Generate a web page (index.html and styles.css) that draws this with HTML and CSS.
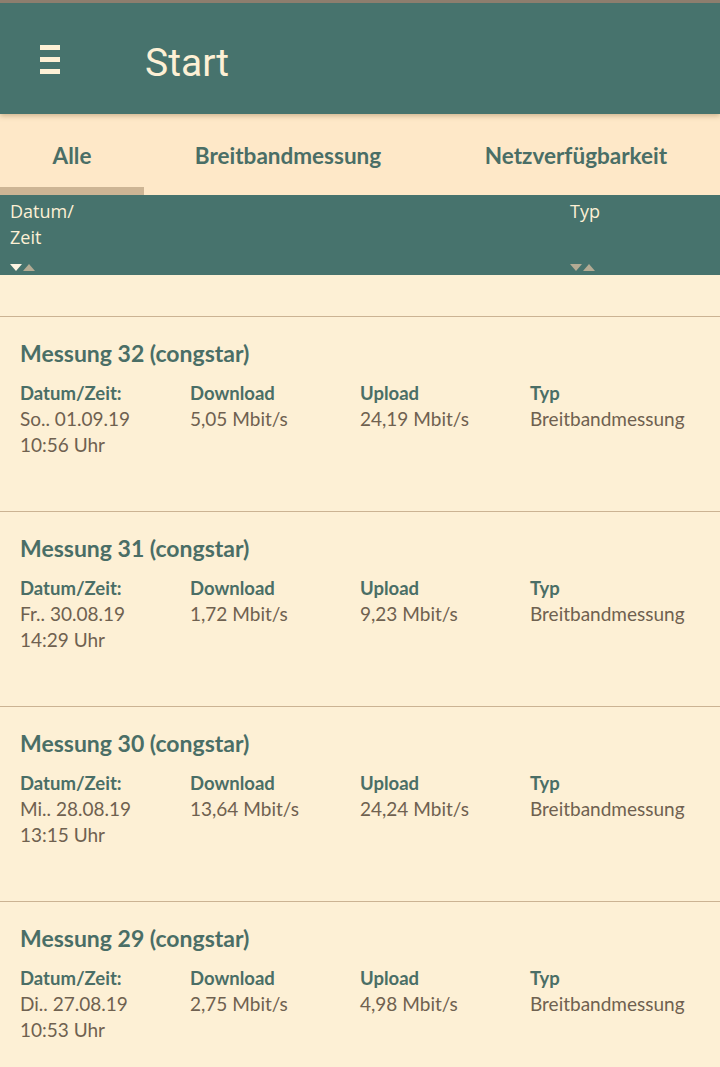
FILE: index.html
```html
<!DOCTYPE html>
<html lang="de">
<head>
<meta charset="utf-8">
<title>Start</title>
<link rel="stylesheet" href="styles.css">
</head>
<body>
<header class="appbar">
  <svg class="menu" width="20" height="30" viewBox="0 0 20 30"><rect x="0" y="0" width="20" height="5"/><rect x="0" y="12" width="20" height="5"/><rect x="0" y="24" width="20" height="5"/></svg>
  <h1 class="apptitle">Start</h1>
</header>
<nav class="tabs">
  <div class="tab tab-active">Alle</div>
  <div class="tab tab-wide">Breitbandmessung</div>
  <div class="tab tab-wide">Netzverfügbarkeit</div>
</nav>
<div class="thead">
  <div class="th th-date">
    <div class="th-label">Datum/<br>Zeit</div>
    <div class="sort"><span class="down active"></span><span class="up"></span></div>
  </div>
  <div class="th th-type">
    <div class="th-label">Typ</div>
    <div class="sort"><span class="down"></span><span class="up"></span></div>
  </div>
</div>
<div class="spacer"></div>
<main class="list">
  <section class="card">
    <h2 class="card-title">Messung 32 (congstar)</h2>
    <div class="grid">
      <div class="col"><div class="lbl">Datum/Zeit:</div><div class="val">So.. 01.09.19<br>10:56 Uhr</div></div>
      <div class="col"><div class="lbl">Download</div><div class="val">5,05 Mbit/s</div></div>
      <div class="col"><div class="lbl">Upload</div><div class="val">24,19 Mbit/s</div></div>
      <div class="col"><div class="lbl">Typ</div><div class="val">Breitbandmessung</div></div>
    </div>
  </section>
  <section class="card">
    <h2 class="card-title">Messung 31 (congstar)</h2>
    <div class="grid">
      <div class="col"><div class="lbl">Datum/Zeit:</div><div class="val">Fr.. 30.08.19<br>14:29 Uhr</div></div>
      <div class="col"><div class="lbl">Download</div><div class="val">1,72 Mbit/s</div></div>
      <div class="col"><div class="lbl">Upload</div><div class="val">9,23 Mbit/s</div></div>
      <div class="col"><div class="lbl">Typ</div><div class="val">Breitbandmessung</div></div>
    </div>
  </section>
  <section class="card">
    <h2 class="card-title">Messung 30 (congstar)</h2>
    <div class="grid">
      <div class="col"><div class="lbl">Datum/Zeit:</div><div class="val">Mi.. 28.08.19<br>13:15 Uhr</div></div>
      <div class="col"><div class="lbl">Download</div><div class="val">13,64 Mbit/s</div></div>
      <div class="col"><div class="lbl">Upload</div><div class="val">24,24 Mbit/s</div></div>
      <div class="col"><div class="lbl">Typ</div><div class="val">Breitbandmessung</div></div>
    </div>
  </section>
  <section class="card">
    <h2 class="card-title">Messung 29 (congstar)</h2>
    <div class="grid">
      <div class="col"><div class="lbl">Datum/Zeit:</div><div class="val">Di.. 27.08.19<br>10:53 Uhr</div></div>
      <div class="col"><div class="lbl">Download</div><div class="val">2,75 Mbit/s</div></div>
      <div class="col"><div class="lbl">Upload</div><div class="val">4,98 Mbit/s</div></div>
      <div class="col"><div class="lbl">Typ</div><div class="val">Breitbandmessung</div></div>
    </div>
  </section>
</main>
</body>
</html>
```

FILE: styles.css
```css
html, body {
  margin: 0;
  padding: 0;
}
body {
  background: #fdf0d5;
  font-family: Lato, "Open Sans", sans-serif;
  width: 720px;
  overflow: hidden;
}
.appbar {
  position: relative;
  z-index: 2;
  height: 111px;
  border-top: 3px solid #8d7e6e;
  background: #47736d;
  display: flex;
  align-items: center;
  padding-left: 40px;
  box-shadow: 0 2px 5px rgba(120, 90, 40, 0.35);
}
.menu {
  fill: #fdf0d5;
  display: block;
  margin-top: 2px;
}
.apptitle {
  margin: 9px 0 0 85px;
  font-family: Roboto, sans-serif;
  font-weight: 400;
  font-size: 39px;
  color: #fdf0d5;
  line-height: 1;
}
.tabs {
  display: flex;
  height: 81px;
  background: #fee8c8;
}
.tab {
  box-sizing: border-box;
  height: 81px;
  display: flex;
  align-items: center;
  justify-content: center;
  padding-top: 9px;
  font-weight: 700;
  font-size: 22.5px;
  color: #4a6e66;
  border-bottom: 8px solid transparent;
}
.tab-active {
  width: 144px;
  border-bottom-color: #cdb595;
}
.tab-wide {
  width: 288px;
}
.thead {
  height: 80px;
  background: #47736d;
  display: flex;
  justify-content: space-between;
  box-sizing: border-box;
  padding: 3px 0 0 10px;
}
.th {
  display: flex;
  flex-direction: column;
  justify-content: space-between;
  height: 74px;
}
.th-type {
  width: 150px;
}
.th-label {
  font-family: "Liberation Sans Narrow", "Open Sans", sans-serif;
  font-size: 18px;
  line-height: 26px;
  color: #fdf0d5;
}
.sort {
  display: flex;
  gap: 1px;
  height: 8px;
  margin-top: auto;
}
.sort span {
  width: 0;
  height: 0;
  border-left: 6px solid transparent;
  border-right: 6px solid transparent;
}
.sort .down {
  border-top: 7px solid #b4ab94;
}
.sort .down.active {
  border-top-color: #fdf4e2;
}
.sort .up {
  border-bottom: 7px solid #b4ab94;
}
.spacer {
  height: 41px;
}
.card {
  border-top: 1px solid #cbb393;
  height: 194px;
  box-sizing: content-box;
  padding: 0 20px;
}
.card-title {
  margin: 22px 0 0;
  font-size: 23px;
  line-height: 28px;
  font-weight: 700;
  color: #4a6e66;
}
.grid {
  margin-top: 13px;
  display: grid;
  grid-template-columns: 170px 170px 170px 170px;
}
.lbl {
  font-weight: 700;
  font-size: 18.5px;
  line-height: 26px;
  color: #4a6e66;
}
.val {
  font-size: 19px;
  line-height: 26px;
  color: #6f6150;
}
```
